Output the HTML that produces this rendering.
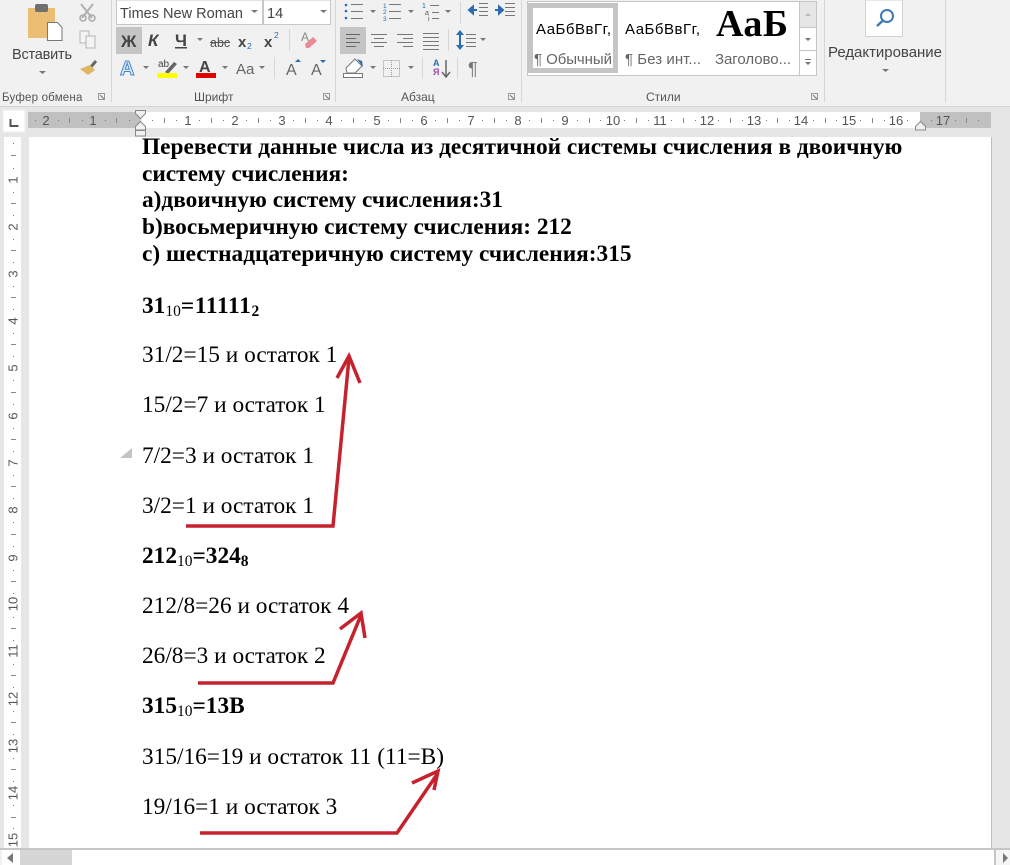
<!DOCTYPE html>
<html><head><meta charset="utf-8"><title>Word</title>
<style>
html,body{margin:0;padding:0;background:#e6e6e6}
#r{position:relative;width:1010px;height:865px;overflow:hidden;background:#e6e6e6}
.t{position:absolute;left:142px;font:23.33px/28px "Liberation Serif","Noto Serif CJK SC",serif;color:#000;white-space:nowrap}
.b{font-weight:bold}
sub{font-size:15.5px;line-height:0;vertical-align:-3px}
sub.n{font-weight:normal}
svg{position:absolute;left:0;top:0}
svg text{font-family:"Liberation Sans","Noto Sans CJK SC",sans-serif}
</style></head><body><div id="r">
<svg width="1010" height="865" viewBox="0 0 1010 865">
<!-- ribbon -->
<rect x="0" y="0" width="1010" height="106" fill="#f1f1f1"/>
<rect x="0" y="106" width="1010" height="1" fill="#d4d4d4"/>
<!-- separators -->
<g fill="#d6d6d6">
<rect x="111" y="0" width="1" height="102"/><rect x="335" y="0" width="1" height="102"/>
<rect x="521" y="0" width="1" height="102"/><rect x="824" y="0" width="1" height="102"/>
<rect x="945" y="0" width="1" height="102"/>
<rect x="289" y="29" width="1" height="22"/><rect x="274" y="57" width="1" height="22"/>
<rect x="460" y="2" width="1" height="22"/><rect x="448" y="29" width="1" height="22"/>
<rect x="422" y="57" width="1" height="22"/><rect x="457" y="57" width="1" height="22"/>
</g>
<!-- clipboard -->
<rect x="28" y="8" width="27" height="30" fill="#eabf73"/>
<rect x="35" y="4" width="13" height="8" rx="2" fill="#6f6f6f"/>
<path d="M47.500 22.500h10l4.500 5v13h-14.500z" fill="#fff" stroke="#777"/>
<text x="12" y="59" font-size="14.500" fill="#444" textLength="60">Вставить</text>
<path d="M39 71h7l-3.500 3z" fill="#777"/>
<path d="M81 4l11 14M93 4l-11 14" stroke="#b0b0b0" stroke-width="2" fill="none"/><circle cx="83" cy="18" r="3" fill="none" stroke="#a9a9a9" stroke-width="1.500"/><circle cx="92" cy="18" r="3" fill="none" stroke="#a9a9a9" stroke-width="1.500"/>
<rect x="80" y="31" width="9" height="12" fill="#f4f4f4" stroke="#b5b5b5"/><rect x="86" y="36" width="9" height="12" fill="#f4f4f4" stroke="#b5b5b5"/>
<path d="M96 61l-6 7" stroke="#666" stroke-width="3"/><path d="M90 65l5 5-7 5-8-6z" fill="#e0b566"/>
<text x="2" y="101" font-size="11.500" fill="#555" letter-spacing=".2">Буфер обмена</text>
<rect x="98.500" y="93.500" width="6" height="6" fill="none" stroke="#999"/><path d="M100 95l4 4" stroke="#777"/>
<!-- font box -->
<rect x="116.500" y="0" width="146" height="24.500" fill="#fff" stroke="#c8c8c8"/>
<rect x="263.500" y="0" width="67" height="24.500" fill="#fff" stroke="#c8c8c8"/>
<text x="120" y="18" font-size="14.500" fill="#444" textLength="123">Times New Roman</text>
<path d="M251 10h7l-3.500 3z" fill="#777"/>
<text x="267" y="18" font-size="14.500" fill="#444">14</text>
<path d="M320 10h7l-3.500 3z" fill="#777"/>
<!-- bold row -->
<rect x="116" y="27" width="26" height="27" fill="#c5c5c5"/>
<text x="121" y="47" font-size="17" font-weight="bold" fill="#444">Ж</text>
<text x="148" y="46" font-size="17" font-weight="bold" font-style="italic" fill="#444">К</text>
<text x="175" y="46" font-size="17" font-weight="bold" fill="#444">Ч</text>
<rect x="175" y="47" width="12" height="1.500" fill="#444"/>
<path d="M197 38h6l-3 3z" fill="#777"/>
<text x="210" y="47" font-size="12.500" fill="#555">abc</text><rect x="210" y="42" width="20" height="1" fill="#555"/>
<text x="238" y="47" font-size="15" font-weight="bold" fill="#444">x</text><text x="247" y="49" font-size="8.500" fill="#2b6cb0">2</text>
<text x="264" y="47" font-size="15" font-weight="bold" fill="#444">x</text><text x="274" y="38" font-size="8.500" fill="#2b6cb0">2</text>
<text x="301" y="41" font-size="12" fill="#888">A</text><path d="M305 44l8-7 4 4-8 7h-3z" fill="#e98b96"/>
<!-- font colours -->
<text x="120" y="75" font-size="20" font-weight="bold" fill="#d9e8f7" stroke="#4a86c5" stroke-width="1">A</text>
<path d="M143 66h6l-3 3z" fill="#777"/>
<text x="158" y="67" font-size="10" fill="#444">ab</text>
<path d="M165 72l9-10 3 2-9 10z" fill="#666"/>
<rect x="157" y="73" width="20" height="5" fill="#ffff00"/>
<path d="M183 66h6l-3 3z" fill="#777"/>
<text x="199" y="72" font-size="16" font-weight="bold" fill="#444">A</text>
<rect x="196" y="73" width="20" height="5" fill="#e00000"/>
<path d="M222 66h6l-3 3z" fill="#777"/>
<text x="236" y="74" font-size="15" fill="#666">Aa</text>
<path d="M259 66h6l-3 3z" fill="#777"/>
<text x="286" y="75" font-size="16" fill="#666">A</text><path d="M295 62h6l-3-3z" fill="#2b6cb0"/>
<text x="311" y="75" font-size="16" fill="#666">A</text><path d="M320 60h6l-3 3z" fill="#2b6cb0"/>
<text x="194" y="101" font-size="12" fill="#555">Шрифт</text>
<rect x="323.500" y="93.500" width="6" height="6" fill="none" stroke="#999"/><path d="M325 95l4 4" stroke="#777"/>
<!-- paragraph -->
<g fill="#2b6cb0"><circle cx="346" cy="5" r="1.300"/><circle cx="346" cy="11" r="1.300"/><circle cx="346" cy="18" r="1.300"/></g>
<g stroke="#777"><path d="M351 4.500h12M351 11.500h12M351 18.500h12M389 4.500h12M389 11.500h12M389 18.500h12M430 5.500h9M432 12.500h7M432 18.500h7"/></g>
<text x="383" y="8" font-size="6.500" fill="#2b6cb0">1</text><text x="383" y="14" font-size="6.500" fill="#2b6cb0">2</text><text x="383" y="21" font-size="6.500" fill="#2b6cb0">3</text>
<text x="422" y="8" font-size="7" fill="#2b6cb0">1</text><text x="425" y="15" font-size="7" fill="#555">a</text><text x="428" y="21" font-size="7" fill="#555">i</text>
<path d="M370 10h6l-3 3zM408 10h6l-3 3zM445 10h6l-3 3z" fill="#777"/>
<path d="M477 10h-6M469 10l4-3.500v7z" stroke="#2b6cb0" stroke-width="2" fill="#2b6cb0"/>
<path d="M479 3.500h9M479 7.500h9M479 11.500h9M479 15.500h9" stroke="#777" fill="none"/>
<path d="M495 10h6M503 10l-4-3.500v7z" stroke="#2b6cb0" stroke-width="2" fill="#2b6cb0"/>
<path d="M505 3.500h10M505 7.500h10M505 11.500h10M505 15.500h10" stroke="#777" fill="none"/>
<rect x="340" y="27" width="26" height="27" fill="#c5c5c5"/>
<path d="M346 34.500h14M346 38.500h10M346 42.500h14M346 46.500h10" stroke="#666" fill="none"/>
<path d="M371 34.500h16M374 38.500h10M371 42.500h16M374 46.500h10" stroke="#777" fill="none"/>
<path d="M397 34.500h16M403 38.500h10M397 42.500h16M403 46.500h10" stroke="#777" fill="none"/>
<path d="M423 33.500h16M423 37.500h16M423 41.500h16M423 45.500h16M423 49.500h16" stroke="#777" fill="none"/>
<path d="M460 32v16" stroke="#2b6cb0" stroke-width="2"/><path d="M456 35l4-5 4 5zM456 45l4 5 4-5z" fill="#2b6cb0"/>
<path d="M466 34.500h10M466 38.500h10M466 42.500h10M466 46.500h10" stroke="#777" fill="none"/>
<path d="M480 38h6l-3 3z" fill="#777"/>
<path d="M346 68l9-9 7 7-7 7h-8z" fill="#fff" stroke="#777"/><path d="M357 59l5 2 1 6z" fill="#2b6cb0"/>
<rect x="343.500" y="73.500" width="19" height="4" fill="#fff" stroke="#777"/>
<path d="M370 66h6l-3 3z" fill="#777"/>
<rect x="383.500" y="60.500" width="16" height="16" fill="none" stroke="#999" stroke-dasharray="1 1"/><path d="M391.500 60v17M383 68.500h17" stroke="#999" stroke-dasharray="1 1"/>
<path d="M408 66h6l-3 3z" fill="#777"/>
<text x="433" y="66" font-size="9" font-weight="bold" fill="#2b6cb0">А</text><text x="433" y="75" font-size="9" font-weight="bold" fill="#a04fa0">Я</text>
<path d="M446 60v17M442 72l4 5 4-5" stroke="#666" stroke-width="1.500" fill="none"/>
<text x="468" y="75" font-size="18" fill="#777">¶</text>
<text x="401" y="101" font-size="12" fill="#555">Абзац</text>
<rect x="508.500" y="93.500" width="6" height="6" fill="none" stroke="#999"/><path d="M510 95l4 4" stroke="#777"/>
<!-- styles -->
<rect x="527.500" y="1.500" width="289" height="74" fill="#fff" stroke="#c6c6c6"/>
<rect x="530.500" y="5.500" width="85" height="65" fill="#fff" stroke="#c5c5c5" stroke-width="5"/>
<text x="536" y="34" font-size="15" fill="#000" textLength="75">АаБбВвГг,</text>
<text x="534" y="64" font-size="15" fill="#666" textLength="78">¶ Обычный</text>
<text x="625" y="34" font-size="15" fill="#000" textLength="75">АаБбВвГг,</text>
<text x="625" y="64" font-size="15" fill="#666" textLength="76">¶ Без инт...</text>
<text x="716" y="36" font-size="38" font-weight="bold" fill="#000" style="font-family:'Liberation Serif',serif" textLength="72">АаБ</text>
<text x="715" y="64" font-size="15" fill="#666" textLength="76">Заголово...</text>
<rect x="799.500" y="1.500" width="17" height="74" fill="#fff" stroke="#c6c6c6"/>
<rect x="800" y="2" width="16" height="25" fill="#e6e6e6"/>
<path d="M799 27.500h18M799 50.500h18" stroke="#c6c6c6"/>
<path d="M805 16h6l-3-3z" fill="#bbb"/><path d="M805 38h6l-3 3z" fill="#777"/>
<path d="M805 59.500h6" stroke="#777"/><path d="M805 62h6l-3 3z" fill="#777"/>
<text x="646" y="101" font-size="12" fill="#555">Стили</text>
<rect x="811.500" y="93.500" width="6" height="6" fill="none" stroke="#999"/><path d="M813 95l4 4" stroke="#777"/>
<!-- edit -->
<rect x="865.500" y="0" width="37" height="36.500" fill="#fff" stroke="#d0d0d0"/>
<circle cx="887" cy="16" r="6" fill="none" stroke="#3d7ab5" stroke-width="2"/><path d="M883 20.500l-6 5.500" stroke="#3d7ab5" stroke-width="2.500"/>
<text x="828" y="57" font-size="15" fill="#444" textLength="114">Редактирование</text>
<path d="M882 69h7l-3.500 3z" fill="#777"/>
<!-- horizontal ruler -->
<rect x="3" y="110" width="22" height="22" fill="#fff" stroke="#eee"/>
<path d="M10.500 119v7h8" fill="none" stroke="#555" stroke-width="2"/>
<rect x="28" y="112" width="963" height="16" fill="#c0c0c0"/>
<rect x="141" y="112" width="779" height="16" fill="#fff"/>
<g font-size="13" fill="#555" text-anchor="middle">
<text x="46" y="125">2</text><text x="93" y="125">1</text><text x="188" y="125">1</text><text x="235" y="125">2</text><text x="282" y="125">3</text><text x="329" y="125">4</text><text x="377" y="125">5</text><text x="424" y="125">6</text><text x="471" y="125">7</text><text x="518" y="125">8</text><text x="565" y="125">9</text><text x="613" y="125">10</text><text x="660" y="125">11</text><text x="707" y="125">12</text><text x="754" y="125">13</text><text x="801" y="125">14</text><text x="849" y="125">15</text><text x="896" y="125">16</text><text x="943" y="125">17</text>
</g>
<path d="M35 120.500h1M58 120.500h1M82 120.500h1M105 120.500h1M129 120.500h1M152 120.500h1M176 120.500h1M199 120.500h1M223 120.500h1M246 120.500h1M270 120.500h1M293 120.500h1M317 120.500h1M341 120.500h1M365 120.500h1M388 120.500h1M412 120.500h1M435 120.500h1M459 120.500h1M482 120.500h1M506 120.500h1M529 120.500h1M553 120.500h1M577 120.500h1M600 120.500h1M624 120.500h1M648 120.500h1M671 120.500h1M695 120.500h1M718 120.500h1M742 120.500h1M766 120.500h1M789 120.500h1M813 120.500h1M836 120.500h1M860 120.500h1M884 120.500h1M907 120.500h1M931 120.500h1M955 120.500h1M978 120.500h1" stroke="#777" fill="none"/>
<path d="M69.500 118v5M116.500 118v5M164.500 118v5M211.500 118v5M258.500 118v5M305.500 118v5M353.500 118v5M400.500 118v5M447.500 118v5M494.500 118v5M541.500 118v5M589.500 118v5M636.500 118v5M683.500 118v5M730.500 118v5M777.500 118v5M825.500 118v5M872.500 118v5M966.500 118v5" stroke="#888" fill="none"/>
<path d="M135.500 110.500h10v3l-5 5-5-5z" fill="#f1f1f1" stroke="#888"/>
<path d="M140.500 121.500l5 5v3.500h-10v-3.500z" fill="#f1f1f1" stroke="#888"/>
<rect x="135.500" y="130.500" width="10" height="5.500" fill="#f1f1f1" stroke="#888"/>
<path d="M920.500 121.500l5 5v3.500h-10v-3.500z" fill="#f1f1f1" stroke="#888"/>
<!-- vertical ruler -->
<rect x="4" y="137" width="17" height="713" fill="#fff"/>
<g font-size="13" fill="#555" text-anchor="middle">
<text transform="translate(17.500,180) rotate(-90)">1</text><text transform="translate(17.500,227) rotate(-90)">2</text><text transform="translate(17.500,274) rotate(-90)">3</text><text transform="translate(17.500,321) rotate(-90)">4</text><text transform="translate(17.500,368) rotate(-90)">5</text><text transform="translate(17.500,416) rotate(-90)">6</text><text transform="translate(17.500,463) rotate(-90)">7</text><text transform="translate(17.500,510) rotate(-90)">8</text><text transform="translate(17.500,558) rotate(-90)">9</text><text transform="translate(17.500,604) rotate(-90)">10</text><text transform="translate(17.500,651) rotate(-90)">11</text><text transform="translate(17.500,699) rotate(-90)">12</text><text transform="translate(17.500,746) rotate(-90)">13</text><text transform="translate(17.500,793) rotate(-90)">14</text><text transform="translate(17.500,840) rotate(-90)">15</text>
</g>
<path d="M13 143.500h1M13 168.500h1M13 192.500h1M13 215.500h1M13 239.500h1M13 262.500h1M13 286.500h1M13 309.500h1M13 333.500h1M13 356.500h1M13 380.500h1M13 404.500h1M13 428.500h1M13 451.500h1M13 475.500h1M13 498.500h1M13 522.500h1M13 546.500h1M13 570.500h1M13 593.500h1M13 617.500h1M13 640.500h1M13 664.500h1M13 687.500h1M13 711.500h1M13 734.500h1M13 758.500h1M13 781.500h1M13 805.500h1M13 828.500h1" stroke="#777" fill="none"/>
<path d="M11 155.500h5M11 203.500h5M11 250.500h5M11 297.500h5M11 344.500h5M11 392.500h5M11 439.500h5M11 486.500h5M11 534.500h5M11 581.500h5M11 628.500h5M11 675.500h5M11 722.500h5M11 769.500h5M11 817.500h5" stroke="#888" fill="none"/>
<!-- page -->
<rect x="29" y="137" width="962" height="711" fill="#fff"/>
<rect x="991" y="137" width="1" height="711" fill="#bdbdbd"/>
<!-- bottom scrollbar -->
<rect x="0" y="848" width="1010" height="17" fill="#f1f1f1"/>
<rect x="0" y="848" width="1010" height="2" fill="#c6c6c6"/>
<rect x="2" y="850" width="18" height="15" fill="#fff"/>
<path d="M13 853v10l-6-5z" fill="#777"/>
<rect x="20" y="850" width="52" height="15" fill="#d6d6d6"/>
<rect x="72" y="848" width="923" height="17" fill="#fff"/>
<rect x="72" y="848" width="923" height="2" fill="#c6c6c6"/>
<rect x="994" y="848" width="2" height="17" fill="#c6c6c6"/>
<rect x="996" y="850" width="14" height="15" fill="#f5f5f5"/>
<path d="M1003 853v10l5-5z" fill="#777"/>
<path d="M120 458h12v-10z" fill="#c4c4c4"/>
</svg>

<div class="t b" style="top:133px">Перевести данные числа из десятичной системы счисления в двоичную</div>
<div class="t b" style="top:160px">систему счисления:</div>
<div class="t b" style="top:186px">а)двоичную систему счисления:31</div>
<div class="t b" style="top:213px">b)восьмеричную систему счисления: 212</div>
<div class="t b" style="top:240px">с) шестнадцатеричную систему счисления:315</div>
<div class="t b" style="top:292px">31<sub class="n">10</sub><span style="letter-spacing:.7px">=11111</span><sub>2</sub></div>
<div class="t" style="top:341px">31/2=15 и остаток 1</div>
<div class="t" style="top:391px">15/2=7 и остаток 1</div>
<div class="t" style="top:442px">7/2=3 и остаток 1</div>
<div class="t" style="top:492px">3/2=1 и остаток 1</div>
<div class="t b" style="top:542px">212<sub class="n">10</sub>=324<sub>8</sub></div>
<div class="t" style="top:592px">212/8=26 и остаток 4</div>
<div class="t" style="top:642px">26/8=3 и остаток 2</div>
<div class="t b" style="top:692px">315<sub class="n">10</sub>=13В</div>
<div class="t" style="top:743px">315/16=19 и остаток 11 (11=В)</div>
<div class="t" style="top:793px">19/16=1 и остаток 3</div>

<svg width="1010" height="865" viewBox="0 0 1010 865" style="pointer-events:none">
<g fill="none" stroke="#c6222e" stroke-width="3.500" stroke-linejoin="miter">
<path d="M186 526H333L349 358"/>
<path d="M337 378L349 356L360 383"/>
<path d="M198 683H333L361 615"/>
<path d="M340 629L361 613L365 638"/>
<path d="M200 833H397L438 773"/>
<path d="M412 783L438 771L434 790"/>
</g>
</svg>
</div></body></html>
